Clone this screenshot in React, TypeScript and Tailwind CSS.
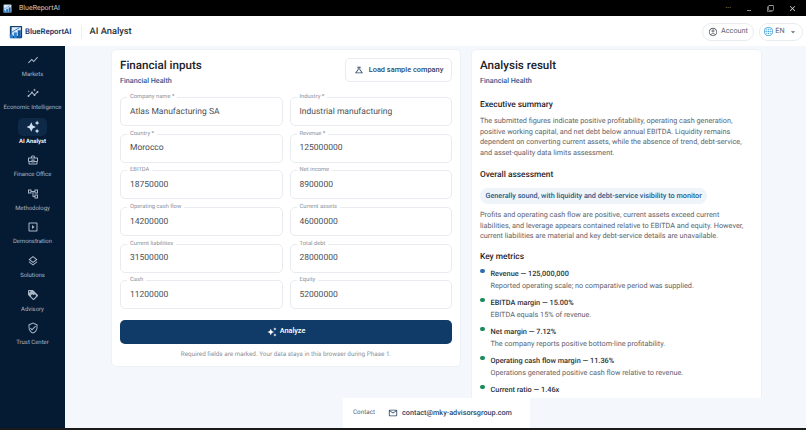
import React from 'react';
import {
  MdShowChart,
  MdInsights,
  MdAutoAwesome,
  MdOutlineBusinessCenter,
  MdOutlineAccountTree,
  MdOutlineSlideshow,
  MdOutlineLayers,
  MdLoyalty,
  MdOutlineVerifiedUser,
  MdOutlineScience,
  MdOutlineEmail,
  MdOutlineAccountCircle,
  MdArrowDropDown,
  MdLanguage,
  MdClose,
  MdMinimize,
  MdOutlineFilterNone,
} from 'react-icons/md';

const navItems = [
  { label: 'Markets', icon: MdShowChart },
  { label: 'Economic Intelligence', icon: MdInsights },
  { label: 'AI Analyst', icon: MdAutoAwesome, active: true },
  { label: 'Finance Office', icon: MdOutlineBusinessCenter },
  { label: 'Methodology', icon: MdOutlineAccountTree },
  { label: 'Demonstration', icon: MdOutlineSlideshow },
  { label: 'Solutions', icon: MdOutlineLayers },
  { label: 'Advisory', icon: MdLoyalty },
  { label: 'Trust Center', icon: MdOutlineVerifiedUser },
];

const fields = [
  { label: 'Company name *', value: 'Atlas Manufacturing SA' },
  { label: 'Industry *', value: 'Industrial manufacturing' },
  { label: 'Country *', value: 'Morocco' },
  { label: 'Revenue *', value: '125000000' },
  { label: 'EBITDA', value: '18750000' },
  { label: 'Net income', value: '8900000' },
  { label: 'Operating cash flow', value: '14200000' },
  { label: 'Current assets', value: '46000000' },
  { label: 'Current liabilities', value: '31500000' },
  { label: 'Total debt', value: '28000000' },
  { label: 'Cash', value: '11200000' },
  { label: 'Equity', value: '52000000' },
];

const metrics = [
  { title: 'Revenue — 125,000,000', note: 'Reported operating scale; no comparative period was supplied.', blue: true },
  { title: 'EBITDA margin — 15.00%', note: 'EBITDA equals 15% of revenue.' },
  { title: 'Net margin — 7.12%', note: 'The company reports positive bottom-line profitability.' },
  { title: 'Operating cash flow margin — 11.36%', note: 'Operations generated positive cash flow relative to revenue.' },
  { title: 'Current ratio — 1.46x', note: 'Current assets exceed current liabilities, providing a reported liquidity buffer.' },
];

const Logo = ({ size, light }: { size: number; light?: boolean }) => (
  <svg width={size} height={size} viewBox="0 0 16 16">
    <rect x="1" y="1" width="14" height="14" rx="1" fill={light ? '#c9d9ea' : '#12406f'} />
    <rect x="3" y="2.5" width="10.5" height="10" fill="#e3edf7" />
    <rect x="1" y="11" width="3.5" height="4" fill="#2f7fd1" />
    <rect x="5.5" y="8.5" width="3.5" height="6.5" fill="#2f7fd1" />
    <rect x="10" y="6" width="3.5" height="9" fill="#1c5fa8" />
    <path d="M2 9 L7 6 L12 3" stroke="#2f7fd1" strokeWidth="1.1" fill="none" />
  </svg>
);

const Sidebar = () => (
  <aside className="w-[65px] shrink-0 bg-[#051b34] flex flex-col pt-[2.5px]">
    {navItems.map((item) => {
      const Icon = item.icon;
      return (
        <div key={item.label} className="h-[33.6px] flex flex-col items-center">
          <div className={`w-[29px] h-[18px] rounded-[5px] flex items-center justify-center mt-[2px] ${item.active ? 'bg-[#0d2947]' : ''}`}>
            <Icon className={item.active ? 'text-[#cfe0f2]' : 'text-[#a9b6c6]'} size={item.active ? 14 : 12} />
          </div>
          <span className={`text-[5.95px] leading-[10px] mt-[1px] whitespace-nowrap ${item.active ? 'text-white font-semibold' : 'text-[#a9b6c6]'}`}>
            {item.label}
          </span>
        </div>
      );
    })}
  </aside>
);

const Field = ({ label, value }: { label: string; value: string }) => (
  <div className="relative h-[29px] rounded-[5px] border border-[#e8ecf1] bg-white flex items-center pl-[9px] pt-[1px]">
    <span className="absolute -top-[5px] left-[6px] bg-white px-[3px] text-[5.8px] leading-[8px] text-[#8a929c]">{label}</span>
    <span className="text-[8.5px] text-[#4a4f57]">{value}</span>
  </div>
);

const FormCard = () => (
  <section className="w-[350px] shrink-0 self-start bg-white rounded-[5px] border border-[#edf1f6] px-[8px] pt-[7px] pb-[7px]">
    <div className="flex justify-between items-start">
      <div>
        <h2 className="text-[11.6px] leading-[16px] font-medium text-[#1b2129]">Financial inputs</h2>
        <div className="text-[7.2px] leading-[10px] mt-[3px] font-medium text-[#2d5b93]">Financial Health</div>
      </div>
      <button className="h-[24px] w-[107px] mt-[1px] rounded-[5px] border border-[#e8ecf1] flex items-center justify-center gap-[5px] text-[7.4px] font-medium text-[#2c4768]">
        <MdOutlineScience size={10} />
        Load sample company
      </button>
    </div>
    <div className="grid grid-cols-[163px_162px] gap-x-[6.5px] gap-y-[7.7px] mt-[11px]">
      {fields.map((f) => (
        <Field key={f.label} {...f} />
      ))}
    </div>
    <button className="w-full h-[24px] mt-[10.5px] rounded-[5px] bg-[#103a68] text-white text-[7.3px] font-medium flex items-center justify-center gap-[3px]">
      <MdAutoAwesome size={10} />
      Analyze
    </button>
    <p className="text-center text-[6.35px] leading-[9px] mt-[6px] text-[#8b929b]">
      Required fields are marked. Your data stays in this browser during Phase 1.
    </p>
  </section>
);

const ResultCard = () => (
  <section className="w-[291px] shrink-0 self-start bg-white rounded-t-[5px] border border-[#edf1f6] pl-[8px] pr-[13px] pt-[7px] pb-[10px] text-[#5d636b]">
    <h2 className="text-[11.6px] leading-[16px] font-medium text-[#1b2129]">Analysis result</h2>
    <div className="text-[7.2px] leading-[10px] mt-[3px] font-medium text-[#2d5b93]">Financial Health</div>
    <h3 className="text-[8.35px] leading-[12px] mt-[13px] font-medium text-[#1f242b]">Executive summary</h3>
    <p className="text-[7.3px] leading-[10.5px] mt-[5px]">
      The submitted figures indicate positive profitability, operating cash generation, positive working capital, and net debt below annual EBITDA. Liquidity remains dependent on converting current assets, while the absence of trend, debt-service, and asset-quality data limits assessment.
    </p>
    <h3 className="text-[8.35px] leading-[12px] mt-[11px] font-medium text-[#1f242b]">Overall assessment</h3>
    <div className="inline-block mt-[3px] h-[16px] rounded-full bg-[#eef4f9] px-[5.5px] text-[7.26px] leading-[16px] font-medium text-[#275a8a] whitespace-nowrap">
      Generally sound, with liquidity and debt-service visibility to monitor
    </div>
    <p className="text-[7.3px] leading-[10.5px] mt-[5px]">
      Profits and operating cash flow are positive, current assets exceed current liabilities, and leverage appears contained relative to EBITDA and equity. However, current liabilities are material and key debt-service details are unavailable.
    </p>
    <h3 className="text-[8.35px] leading-[12px] mt-[9px] font-medium text-[#1f242b]">Key metrics</h3>
    <ul className="flex flex-col gap-[6px] mt-[5px]">
      {metrics.map((m) => (
        <li key={m.title} className="flex">
          <span className={`w-[4.5px] h-[4.5px] rounded-full mt-[1px] mr-[6px] shrink-0 ${m.blue ? 'bg-[#2f6fb0]' : 'bg-[#1a8a5a]'}`} />
          <div>
            <div className="text-[7.35px] leading-[11px] font-medium text-[#2a2f36]">{m.title}</div>
            <div className="text-[7.3px] leading-[11px] mt-[1px]">{m.note}</div>
          </div>
        </li>
      ))}
    </ul>
  </section>
);

export default function App() {
  return (
    <div className="w-[806px] h-[430px] flex flex-col overflow-hidden bg-[#1a1a1a] font-['Roboto',sans-serif] antialiased [text-rendering:geometricPrecision]">
      <div className="h-[16px] shrink-0 bg-black flex items-center justify-between text-[#d0d0d0]">
        <div className="flex items-center gap-[7px] pl-[3px]">
          <Logo size={9} light />
          <span className="text-[7px]">BlueReportAI</span>
        </div>
        <div className="flex items-center gap-[14px] pr-[9px]">
          <span className="text-[7px] leading-[8px]">···</span>
          <MdMinimize size={8} />
          <MdOutlineFilterNone size={7} />
          <MdClose size={9} />
        </div>
      </div>
      <header className="h-[30px] shrink-0 bg-white flex items-center justify-between pl-[9px] pr-[3px] pt-[1px]">
        <div className="flex items-center">
          <Logo size={14} />
          <span className="ml-[2px] text-[7.8px] font-semibold text-[#17396b]">BlueReportAI</span>
          <span className="w-px h-[14px] bg-[#eceff3] ml-[9px]" />
          <span className="ml-[8px] text-[9.3px] font-medium text-[#2a3038]">AI Analyst</span>
        </div>
        <div className="flex items-center gap-[5px]">
          <div className="h-[18px] w-[52px] rounded-full border border-[#e8ecf1] flex items-center justify-center gap-[3px] text-[7.25px] text-[#5f666f]">
            <MdOutlineAccountCircle size={10} />
            Account
          </div>
          <div className="h-[18px] w-[44px] rounded-full border border-[#e8ecf1] flex items-center justify-center gap-[2px] text-[7.25px] text-[#5f666f]">
            <span className="w-[9px] h-[9px] rounded-full bg-[#3fa3d8] flex items-center justify-center text-white">
              <MdLanguage size={9} />
            </span>
            EN
            <MdArrowDropDown size={10} className="ml-[1px]" />
          </div>
        </div>
      </header>
      <div className="flex-1 min-h-0 flex mb-[2px]">
        <Sidebar />
        <main className="flex-1 min-w-0 bg-[#f4f7fc] flex flex-col">
          <div className="flex-1 min-h-0 overflow-hidden flex gap-[10px] pl-[46px] pt-[3px]">
            <FormCard />
            <ResultCard />
          </div>
          <footer className="h-[30px] shrink-0 flex justify-center pl-[2px]">
            <div className="w-[187px] bg-white flex items-center pl-[10px] gap-[13px]">
              <span className="text-[6.3px] text-[#5b626b]">Contact</span>
              <span className="flex items-center gap-[4px] text-[7.27px] font-medium text-[#2c4768] whitespace-nowrap">
                <MdOutlineEmail size={10} />
                contact@mky-advisorsgroup.com
              </span>
            </div>
          </footer>
        </main>
      </div>
    </div>
  );
}
